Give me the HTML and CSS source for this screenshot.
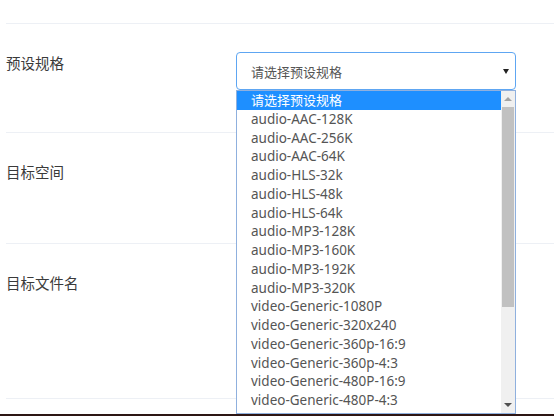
FILE: index.html
```html
<!DOCTYPE html>
<html lang="zh">
<head>
<meta charset="utf-8">
<link rel="stylesheet" href="styles.css">
</head>
<body>
<div class="page">
  <div class="form">
    <div class="row row-top"></div>
    <div class="row row-preset">
      <div class="label">预设规格</div>
      <div class="field">
        <div class="select">
          <span class="select-text">请选择预设规格</span>
          <span class="caret"></span>
        </div>
        <div class="dropdown">
          <ul class="options">
            <li class="opt active">请选择预设规格</li>
            <li class="opt">audio-AAC-128K</li>
            <li class="opt">audio-AAC-256K</li>
            <li class="opt">audio-AAC-64K</li>
            <li class="opt">audio-HLS-32k</li>
            <li class="opt">audio-HLS-48k</li>
            <li class="opt">audio-HLS-64k</li>
            <li class="opt">audio-MP3-128K</li>
            <li class="opt">audio-MP3-160K</li>
            <li class="opt">audio-MP3-192K</li>
            <li class="opt">audio-MP3-320K</li>
            <li class="opt">video-Generic-1080P</li>
            <li class="opt">video-Generic-320x240</li>
            <li class="opt">video-Generic-360p-16:9</li>
            <li class="opt">video-Generic-360p-4:3</li>
            <li class="opt">video-Generic-480P-16:9</li>
            <li class="opt">video-Generic-480P-4:3</li>
          </ul>
          <div class="scrollbar">
            <div class="sb-btn"><span class="tri-up"></span></div>
            <div class="sb-track"><div class="sb-thumb"></div></div>
            <div class="sb-btn"><span class="tri-down"></span></div>
          </div>
        </div>
      </div>
    </div>
    <div class="row row-space">
      <div class="label">目标空间</div>
    </div>
    <div class="row row-file">
      <div class="label">目标文件名</div>
    </div>
  </div>
  <div class="taskbar"></div>
</div>
</body>
</html>
```
FILE: styles.css
```css
html, body {
  margin: 0;
  padding: 0;
  background: #ffffff;
}
.page {
  height: 416px;
  display: flex;
  flex-direction: column;
  overflow: hidden;
  font-family: "Noto Sans", "Noto Sans CJK SC", sans-serif;
}
.form {
  flex: 1;
  padding-left: 6px;
}
.row {
  display: flex;
  border-bottom: 1px solid #edf0f5;
  box-sizing: border-box;
  padding-top: 28px;
}
.row-top {
  height: 24px;
  padding-top: 0;
}
.row-preset { height: 109px; }
.row-space { height: 111px; }
.row-file { height: 155px; }
.label {
  width: 230px;
  flex: none;
  font-family: "Noto Sans CJK SC", sans-serif;
  font-size: 14.5px;
  line-height: 21px;
  color: #3a3a3a;
}
.field {
  position: relative;
  width: 280px;
}
.select {
  height: 38px;
  box-sizing: border-box;
  border: 1px solid #5ea6f2;
  border-radius: 4px;
  display: flex;
  align-items: center;
  justify-content: space-between;
  padding: 0 6px 0 14px;
}
.select-text {
  font-family: "Noto Sans CJK SC", sans-serif;
  font-size: 13px;
  color: #555555;
}
.caret {
  width: 0;
  height: 0;
  border-left: 3px solid transparent;
  border-right: 3px solid transparent;
  border-top: 5px solid #222222;
  margin-right: 0;
}
.dropdown {
  position: absolute;
  top: 38px;
  left: 0;
  width: 280px;
  height: 324px;
  box-sizing: border-box;
  border: 1px solid #8fb0de;
  background: #ffffff;
  display: flex;
  overflow: hidden;
}
.options {
  list-style: none;
  margin: 0;
  padding: 0;
  flex: 1;
}
.opt {
  height: 18.75px;
  line-height: 18.75px;
  padding-left: 14px;
  font-size: 13.5px;
  color: #555555;
  white-space: nowrap;
}
.opt.active {
  background: #1e8fff;
  color: #ffffff;
  font-family: "Noto Sans CJK SC", sans-serif;
  font-size: 13px;
}
.scrollbar {
  width: 14px;
  flex: none;
  background: #f0f0f0;
  display: flex;
  flex-direction: column;
}
.sb-btn {
  height: 16px;
  display: flex;
  align-items: center;
  justify-content: center;
}
.sb-track {
  flex: 1;
  padding: 0 1px;
}
.sb-thumb {
  height: 200px;
  background: #c1c1c1;
}
.tri-up {
  width: 0;
  height: 0;
  border-left: 4px solid transparent;
  border-right: 4px solid transparent;
  border-bottom: 4px solid #a3a3a3;
}
.tri-down {
  width: 0;
  height: 0;
  border-left: 4px solid transparent;
  border-right: 4px solid transparent;
  border-top: 4px solid #505050;
}
.taskbar {
  height: 2px;
  background: #2d1614;
  flex: none;
}
```
